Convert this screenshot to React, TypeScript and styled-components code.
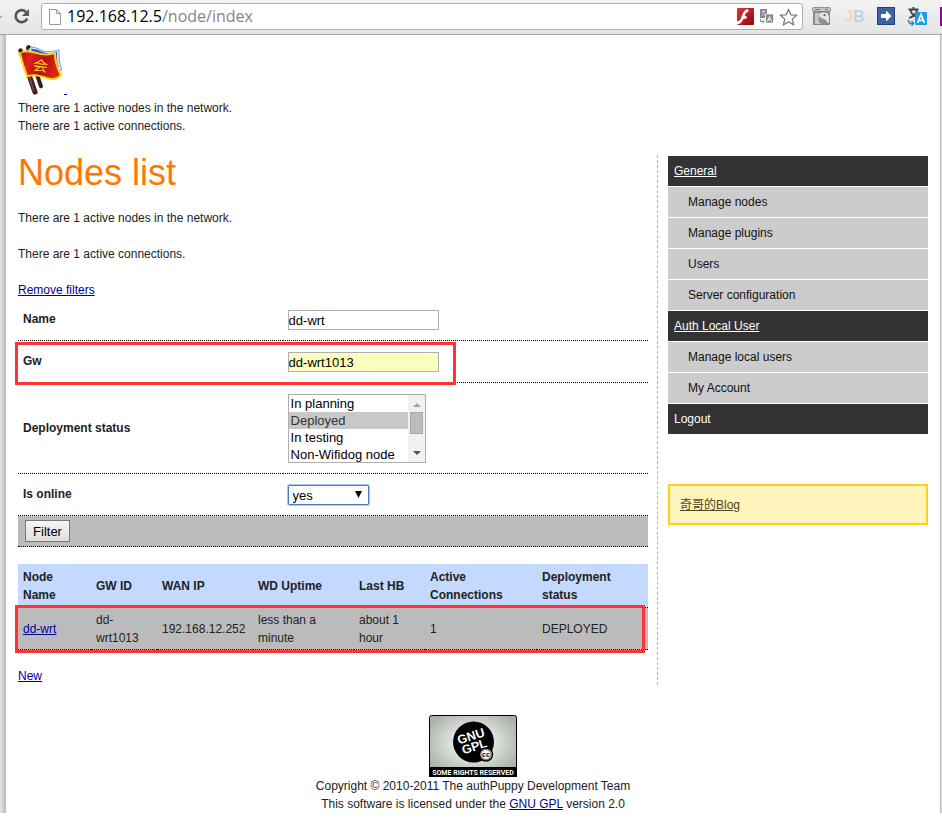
import React from "react";
import styled, { createGlobalStyle, css } from "styled-components";

const GlobalStyle = createGlobalStyle`
  *, *::before, *::after { box-sizing: border-box; }
  body {
    margin: 0;
    background: #fff;
    color: #222;
    font: 12px/18px "Liberation Sans", Arial, sans-serif;
  }
  p, h1, ul { margin: 0; padding: 0; }
  a { color: #009; }
`;

/* ---------- browser bar ---------- */

const Toolbar = styled.header`
  display: flex;
  align-items: flex-start;
  height: 35px;
  padding-top: 3px;
  overflow: hidden;
  background: linear-gradient(#f3f3f3, #e4e4e4);
  border-bottom: 1px solid #a6a6a6;
`;

const ForwardStub = styled.span`
  width: 2px;
  height: 2px;
  margin: 13px 11px 0 0;
  background: #b4b4b4;
`;

const IconButton = styled.button`
  display: flex;
  flex: none;
  padding: 0;
  border: 0;
  background: none;
`;

const ReloadButton = styled(IconButton)`
  margin: 4px 10px 0 0;
`;

const AddressBar = styled.div`
  display: flex;
  flex: 1;
  align-items: center;
  height: 27px;
  padding: 0 4px 0 6px;
  background: #fff;
  border: 1px solid #b0b0b0;
  border-radius: 3px;
`;

const Address = styled.span`
  flex: 1;
  margin-left: 5px;
  color: #858585;
  font: 16px/25px "Open Sans", "Noto Sans", sans-serif;
  white-space: nowrap;
  outline: 0;
`;

const Host = styled.span`
  color: #000;
`;

const AddressIcons = styled.div`
  display: flex;
  align-items: center;
  gap: 5px;
`;

const Extensions = styled.div`
  display: flex;
  align-items: center;
  gap: 12px;
  margin: 3px 0 0 9px;
`;

const NextExtension = styled.span`
  width: 2px;
  height: 19px;
  margin: 4px 0 0 13px;
  background: #909;
`;

/* ---------- page ---------- */

const Frame = styled.div`
  display: grid;
  grid-template-columns: 6px minmax(0, 1fr) 2px;
`;

const LeftShade = styled.div`
  background: linear-gradient(to right, #e6e6e6, #b8b8b8);
`;

const RightShade = styled.div`
  background: #ddd;
  border-left: 1px solid #bbb;
`;

const Page = styled.div`
  padding: 10px 12px 0;
`;

const LogoLink = styled.a`
  display: flex;
  align-items: flex-start;
  height: 54px;
`;

const LogoSpace = styled.span`
  width: 3px;
  height: 1px;
  margin-top: 49px;
  background: #009;
`;

const Columns = styled.div`
  display: grid;
  grid-template-columns: minmax(0, 1fr) 260px;
  gap: 10px;
  margin-top: 20px;
`;

const Main = styled.main`
  padding-right: 9px;
  border-right: 1px dashed #b4b4b4;
`;

const Title = styled.h1`
  margin-bottom: 18px;
  color: #f70;
  font-size: 36px;
  font-weight: 400;
  line-height: 36px;
`;

const Spaced = styled.p`
  margin-bottom: 18px;
`;

const Table = styled.table`
  width: 100%;
  table-layout: fixed;
  border-spacing: 0;
`;

const cell = css`
  padding: 2px 5px;
  border-bottom: 1px dotted #000;
  text-align: left;
`;

const FilterRow = styled.tr<{ $height: number }>`
  position: relative;
  height: ${(p) => p.$height}px;
`;

const FilterHead = styled.th<{ $middle?: boolean }>`
  ${cell}
  padding-top: ${(p) => (p.$middle ? 2 : 11)}px;
  vertical-align: ${(p) => (p.$middle ? "middle" : "top")};
`;

const Cell = styled.td`
  ${cell}
`;

const FilterFoot = styled.tr`
  height: 31px;
  background: #bbb;
`;

const FootCell = styled.td`
  ${cell}
  padding: 2px 7px;
`;

const control = css`
  display: block;
  border: 1px solid #b0b0b0;
  color: #000;
  font: 13px/17px "Liberation Sans", Arial, sans-serif;
`;

const TextBox = styled.input<{ $autofill?: boolean }>`
  ${control}
  width: 151px;
  height: 20px;
  padding: 1px 0 0;
  background: ${(p) => (p.$autofill ? "#faffbd" : "#fff")};
`;

const arrow = (d: string, fill: string) =>
  `url("data:image/svg+xml,%3Csvg xmlns='http://www.w3.org/2000/svg' width='17' height='17'%3E%3Cpath d='${d}' fill='%23${fill}'/%3E%3C/svg%3E")`;

const ListWrap = styled.div`
  position: relative;
  width: 138px;
`;

const StatusList = styled.select`
  ${control}
  width: 100%;
  height: 69px;
  padding: 0;
  border-radius: 0;
  background: #fff;
  overflow-y: scroll;
  scrollbar-width: none;

  option {
    height: 17px;
    min-height: 17px;
    padding: 1px 2px 0;
    line-height: 16px;
  }
  option:checked {
    color: #333;
    background: #c8c8c8 linear-gradient(#c8c8c8, #c8c8c8);
  }
`;

const ScrollTrack = styled.span`
  position: absolute;
  top: 1px;
  right: 1px;
  bottom: 1px;
  width: 17px;
  padding: 17px 2px;
  background:
    ${arrow("M5 12h8l-4-4z", "a3a3a3")} top no-repeat,
    ${arrow("M5 6h8l-4 4z", "505050")} bottom no-repeat,
    #f1f1f1;
  pointer-events: none;
`;

const ScrollThumb = styled.span`
  display: block;
  height: 22px;
  border: 1px solid #a8a8a8;
  background: #bcbcbc;
`;

const OnlineSelect = styled.select`
  ${control}
  appearance: none;
  width: 81px;
  height: 20px;
  padding: 1px 4px 0;
  border: 1px solid #4d7bc4;
  border-radius: 1px;
  outline: 1px solid #a9c6f5;
  background: #fff ${arrow("M5 5h7l-3.500 7z", "000")} right 1px center no-repeat;
`;

const FilterButton = styled.button`
  ${control}
  width: 45px;
  height: 22px;
  padding: 0;
  border-color: #777;
  background: linear-gradient(#f6f6f6, #dedede);
`;

const Highlight = styled.span<{ $wide?: boolean }>`
  position: absolute;
  top: ${(p) => (p.$wide ? -3 : 1)}px;
  bottom: ${(p) => (p.$wide ? -3 : -2)}px;
  left: -3px;
  width: ${(p) => (p.$wide ? "100%" : "70%")};
  border: 3px solid #f33;
  pointer-events: none;
`;

const NodesTable = styled(Table)`
  margin: 17px 0;
`;

const NodesHead = styled.th`
  ${cell}
  padding: 4px 5px 3px;
  background: #c3d9ff;
`;

const NodeRow = styled.tr`
  position: relative;
  height: 42px;
  background: #bbb;
`;

const Side = styled.aside`
  padding-top: 1px;
`;

const Menu = styled.ul`
  display: grid;
  gap: 1px;
  list-style: none;
`;

const MenuLink = styled.a<{ $heading?: boolean; $plain?: boolean }>`
  display: block;
  padding: ${(p) => (p.$heading ? "6px" : "6px 20px")};
  background: ${(p) => (p.$heading ? "#333" : "#ccc")};
  color: ${(p) => (p.$heading ? "#fff" : "#111")};
  text-decoration: ${(p) => (p.$heading && !p.$plain ? "underline" : "none")};
`;

const Notice = styled.div`
  height: 41px;
  margin-top: 50px;
  padding: 10px;
  border: 2px solid #fcd021;
  background: #fff4bb;

  a {
    color: #514721;
    font-family: "Liberation Sans", "Noto Sans CJK SC", sans-serif;
  }
`;

const Footer = styled.footer`
  margin-top: 30px;
  text-align: center;

  svg { display: block; margin: 0 auto; }
`;

/* ---------- drawings ---------- */

const ReloadIcon = () => (
  <svg width="18" height="18" viewBox="0 0 18 18">
    <path d="M14.200 11.500A6 6 0 1 1 13 5" fill="none" stroke="#555" strokeWidth="2.600" />
    <path d="M16 2v7H9z" fill="#555" />
  </svg>
);

const PageIcon = () => (
  <svg width="14" height="16" viewBox="0 0 14 16">
    <path d="M1.500.5h7l4 4v11h-11z" fill="#fcfcfc" stroke="#999" />
    <path d="M8.500.5v4h4" fill="none" stroke="#999" />
  </svg>
);

const FlashIcon = () => (
  <svg width="18" height="17" viewBox="0 0 18 17">
    <defs>
      <linearGradient id="flash" x2="1" y2="1">
        <stop stopColor="#d83a38" />
        <stop offset="1" stopColor="#96080c" />
      </linearGradient>
    </defs>
    <rect x="1" width="17" height="17" rx="1" fill="url(#flash)" />
    <path d="M12 1C8 1.500 7 5.500 5.500 9 4.500 12 3.500 13 0 13.500v3c4.500 0 6.300-2.700 7.500-5.700h3V8H8.700C9.500 5.500 10.300 4 12.500 3.800z" fill="#fff" />
  </svg>
);

const TranslateGreyIcon = () => (
  <svg width="15" height="15" viewBox="0 0 15 15">
    <path d="M1 0h7v5H6v4H1z" fill="#888" />
    <path d="M2.500 2.500h4M4.500 1v1.500M6 3.500L3 7M3 3.500l2.500 3" stroke="#ddd" strokeWidth=".8" fill="none" />
    <path d="M6.500 5h8v9h-8z" fill="#888" stroke="#fff" strokeWidth=".7" />
    <path d="M8.500 12.500l2-5 2 5M9.300 10.700h2.500" stroke="#fff" fill="none" />
    <path d="M1.500 10v2.500H5M3.500 10.800L5.300 12.500l-1.800 1.700" stroke="#888" fill="none" />
  </svg>
);

const StarIcon = () => (
  <svg width="19" height="18" viewBox="0 0 19 18">
    <path d="M9.500 1.200l2.300 5.600 6 .4-4.600 3.900 1.500 5.900-5.200-3.200L4.300 17l1.500-5.900L1.200 7.200l6-.4z" fill="#fff" stroke="#777" strokeWidth="1.200" strokeLinejoin="round" />
  </svg>
);

const PhotoIcon = () => (
  <svg width="20" height="20" viewBox="0 0 20 20">
    <rect x=".5" y="1.500" width="18" height="4" rx="1" fill="#c4c4c4" stroke="#909090" />
    <path d="M3 3.500h5M13 3.500h3" stroke="#777" />
    <path d="M1.500 5.500h16v13h-16z" fill="#909090" stroke="#858585" />
    <path d="M3 7h3c2 2 1 4 .500 6S8 17 9 18H3z" fill="#c8c8c8" />
    <path d="M7 8c3-2.500 9-2 10 2v7c-2 0-2-3-5-4S7 11 7 8z" fill="#e4e4e4" />
    <circle cx="12.500" cy="9.200" r="1.100" fill="#666" />
  </svg>
);

const JbIcon = () => (
  <svg width="21" height="20" viewBox="0 0 21 20" fontFamily="Liberation Sans, sans-serif" fontSize="16" fontWeight="700">
    <text x="0" y="16">
      <tspan fill="#f4d9b6">J</tspan>
      <tspan fill="#bcd6e4">B</tspan>
    </text>
  </svg>
);

const ArrowIcon = () => (
  <svg width="18" height="18" viewBox="0 0 18 18">
    <rect x=".5" y=".5" width="17" height="17" fill="#3f62a0" stroke="#20407c" />
    <path d="M4 7h5V3.500L14.500 9 9 14.500V11H4z" fill="#fff" />
  </svg>
);

const TranslateIcon = () => (
  <svg width="20" height="20" viewBox="0 0 20 20" fill="none">
    <path d="M1.500 3.500h10M6.500 1v2.500M10 4C9 8 6 11 2 12M3.500 4c1 4 3 6 6 7" stroke="#444" strokeWidth="1.800" />
    <path d="M1 14l2 3.500h3M4.500 15l2 2.500-2 2" stroke="#2a8ccc" strokeWidth="1.600" />
    <rect x="8" y="6" width="12" height="13" rx="1" fill="#1c9cec" />
    <path d="M10.500 17L14 8.500l3.500 8.500M11.500 14.300h5" stroke="#fff" strokeWidth="1.700" />
  </svg>
);

const FlagLogo = () => (
  <svg width="46" height="50" viewBox="0 0 46 52" preserveAspectRatio="none">
    <defs>
      <linearGradient id="cloth" x2="1" y2=".3">
        <stop stopColor="#a90d10" />
        <stop offset=".3" stopColor="#e0231a" />
        <stop offset=".6" stopColor="#b80c12" />
        <stop offset="1" stopColor="#dc2519" />
      </linearGradient>
    </defs>
    <path d="M10 3l13 40" stroke="#3b1c20" strokeWidth="4" strokeLinecap="round" />
    <path d="M10 2c9-1 12 5 20 5 5 0 8-1 11-2 0 8 0 13 3 21-4 1-7 2-12 0L15 22z" fill="#dcebfa" stroke="#7894c8" />
    <path d="M13 4c8 0 12 5 18 5 3 0 5-1 8-2 0 7 0 11 2 16l-8 1-16-2z" fill="#2e5cae" />
    <path d="M3 7l14 42" stroke="#3b1c20" strokeWidth="5" strokeLinecap="round" />
    <path d="M11 32l5 16" stroke="#8a4b40" strokeWidth="1.500" />
    <path d="M2 7.500c6-2 11-1 17 1 6 2 12 2 18 0 0 8 2 15 6 23-4 4-10 5-17 2-6-2-10-3-17-1C6 24 3 15 2 7.500z" fill="url(#cloth)" stroke="#fcd90c" strokeWidth="2" strokeLinejoin="round" />
    <text x="15" y="27" transform="rotate(8 21 21)" fontFamily="Noto Sans CJK SC, sans-serif" fontSize="15" fill="#ffd51c">会</text>
    <circle cx="2.500" cy="5.500" r="2" fill="#35181c" />
    <circle cx="10.500" cy="2" r="2" fill="#35181c" />
  </svg>
);

const GplBadge = () => (
  <svg width="88" height="62" viewBox="0 0 88 62" fontWeight="700" fill="#fff">
    <defs>
      <radialGradient id="badge" cx=".5" cy=".45" r=".6">
        <stop offset=".35" stopColor="#e4e8e2" />
        <stop offset="1" stopColor="#a9b0a8" />
      </radialGradient>
    </defs>
    <rect x=".5" y=".5" width="87" height="61" rx="2" fill="url(#badge)" stroke="#000" />
    <circle cx="44.500" cy="27" r="20.500" fill="#000" />
    <g transform="rotate(-18 44 27)" fontFamily="Liberation Sans, sans-serif" fontSize="12.500">
      <text x="30" y="25">GNU</text>
      <text x="31" y="36">GPL</text>
    </g>
    <circle cx="57" cy="39.500" r="6.500" stroke="#000" strokeWidth="1.500" />
    <circle cx="57" cy="39.500" r="5" fill="none" stroke="#000" strokeWidth=".6" />
    <text x="53" y="42" fill="#000" fontFamily="Liberation Sans, sans-serif" fontSize="7">cc</text>
    <path d="M0 52h88v10H0z" fill="#000" />
    <text x="44" y="60" textAnchor="middle" fontFamily="Roboto, sans-serif" fontSize="7">SOME RIGHTS RESERVED</text>
  </svg>
);

/* ---------- data ---------- */

const menu = [
  { label: "General", heading: true },
  { label: "Manage nodes" },
  { label: "Manage plugins" },
  { label: "Users" },
  { label: "Server configuration" },
  { label: "Auth Local User", heading: true },
  { label: "Manage local users" },
  { label: "My Account" },
  { label: "Logout", heading: true, plain: true },
];

const statuses = ["In planning", "Deployed", "In testing", "Non-Wifidog node"];

const nodeColumns = [
  { label: "Node Name", width: 73 },
  { label: "GW ID", width: 66 },
  { label: "WAN IP", width: 96 },
  { label: "WD Uptime", width: 101 },
  { label: "Last HB", width: 71 },
  { label: "Active Connections", width: 112 },
  { label: "Deployment status", width: 111 },
];

export default function App() {
  return (
    <>
      <GlobalStyle />
      <Toolbar>
        <ForwardStub />
        <ReloadButton aria-label="Reload"><ReloadIcon /></ReloadButton>
        <AddressBar>
          <PageIcon />
          <Address role="textbox" aria-label="Address" tabIndex={0}>
            <Host>192.168.12.5</Host>/node/index
          </Address>
          <AddressIcons>
            <IconButton aria-label="Flash"><FlashIcon /></IconButton>
            <IconButton aria-label="Translate page"><TranslateGreyIcon /></IconButton>
            <IconButton aria-label="Bookmark"><StarIcon /></IconButton>
          </AddressIcons>
        </AddressBar>
        <Extensions>
          <IconButton aria-label="Pictures"><PhotoIcon /></IconButton>
          <IconButton aria-label="JB"><JbIcon /></IconButton>
          <IconButton aria-label="Go"><ArrowIcon /></IconButton>
          <IconButton aria-label="Translate"><TranslateIcon /></IconButton>
        </Extensions>
        <NextExtension />
      </Toolbar>

      <Frame>
        <LeftShade />
        <Page>
          <LogoLink href="#" aria-label="Home"><FlagLogo /><LogoSpace /></LogoLink>
          <p>There are 1 active nodes in the network.</p>
          <p>There are 1 active connections.</p>

          <Columns>
            <Main>
              <Title>Nodes list</Title>
              <Spaced>There are 1 active nodes in the network.</Spaced>
              <Spaced>There are 1 active connections.</Spaced>
              <a href="#">Remove filters</a>

              <form onSubmit={(e) => e.preventDefault()}>
                <Table>
                  <colgroup>
                    <col style={{ width: "42%" }} />
                    <col />
                  </colgroup>
                  <tbody>
                    <FilterRow $height={42}>
                      <FilterHead scope="row"><label htmlFor="name">Name</label></FilterHead>
                      <Cell><TextBox id="name" defaultValue="dd-wrt" /></Cell>
                    </FilterRow>
                    <FilterRow $height={42}>
                      <FilterHead scope="row"><label htmlFor="gw">Gw</label><Highlight /></FilterHead>
                      <Cell><TextBox id="gw" $autofill defaultValue="dd-wrt1013" /></Cell>
                    </FilterRow>
                    <FilterRow $height={91}>
                      <FilterHead scope="row" $middle><label htmlFor="status">Deployment status</label></FilterHead>
                      <Cell>
                        <ListWrap>
                          <StatusList id="status" multiple size={4} defaultValue={["Deployed"]}>
                            {statuses.map((s) => <option key={s}>{s}</option>)}
                          </StatusList>
                          <ScrollTrack><ScrollThumb /></ScrollTrack>
                        </ListWrap>
                      </Cell>
                    </FilterRow>
                    <FilterRow $height={42}>
                      <FilterHead scope="row"><label htmlFor="online">Is online</label></FilterHead>
                      <Cell>
                        <OnlineSelect id="online" defaultValue="yes">
                          <option>yes</option>
                          <option>no</option>
                        </OnlineSelect>
                      </Cell>
                    </FilterRow>
                  </tbody>
                  <tfoot>
                    <FilterFoot>
                      <FootCell colSpan={2}><FilterButton type="submit">Filter</FilterButton></FootCell>
                    </FilterFoot>
                  </tfoot>
                </Table>
              </form>

              <NodesTable>
                <colgroup>
                  {nodeColumns.map((c) => <col key={c.label} style={{ width: c.width }} />)}
                </colgroup>
                <thead>
                  <tr>{nodeColumns.map((c) => <NodesHead key={c.label} scope="col">{c.label}</NodesHead>)}</tr>
                </thead>
                <tbody>
                  <NodeRow>
                    <Cell><a href="#">dd-wrt</a><Highlight $wide /></Cell>
                    <Cell>dd-wrt1013</Cell>
                    <Cell>192.168.12.252</Cell>
                    <Cell>less than a minute</Cell>
                    <Cell>about 1 hour</Cell>
                    <Cell>1</Cell>
                    <Cell>DEPLOYED</Cell>
                  </NodeRow>
                </tbody>
              </NodesTable>
              <a href="#">New</a>
            </Main>

            <Side>
              <nav>
                <Menu>
                  {menu.map((m) => (
                    <li key={m.label}>
                      <MenuLink href="#" $heading={m.heading} $plain={m.plain}>{m.label}</MenuLink>
                    </li>
                  ))}
                </Menu>
              </nav>
              <Notice><a href="#">奇哥的Blog</a></Notice>
            </Side>
          </Columns>

          <Footer>
            <GplBadge />
            <p>Copyright © 2010-2011 The authPuppy Development Team</p>
            <p>This software is licensed under the <a href="#">GNU GPL</a> version 2.0</p>
          </Footer>
        </Page>
        <RightShade />
      </Frame>
    </>
  );
}
